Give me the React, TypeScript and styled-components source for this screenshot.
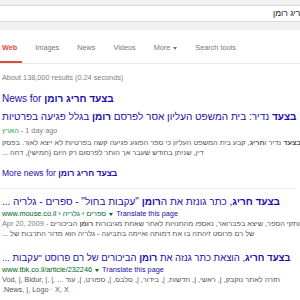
import React from "react";
import styled, { createGlobalStyle } from "styled-components";

const blue = "#1a0dab";
const small = "7.3px";

const GlobalStyle = createGlobalStyle`
  html, body {
    margin: 0;
    width: 300px;
    height: 300px;
    overflow: hidden;
    background: #fff;
    font-family: "Liberation Sans", Arial, sans-serif;
  }
`;

const Header = styled.header`
  background: #f2f1f2;
  padding: 5px 0 8px;
`;

const SearchField = styled.div`
  height: 15px;
  background: #fff;
  border-top: 1px solid #d9d9d9;
  border-bottom: 1px solid #d9d9d9;
  padding-left: 273px;
  font-size: 8.5px;
  line-height: 15px;
  color: #222;
  white-space: nowrap;
  overflow: hidden;
`;

const Tabs = styled.nav`
  display: flex;
  gap: 11px;
  border-bottom: 1px solid #ebebeb;
`;

const Tab = styled.div<{ $active?: boolean }>`
  padding: 13px 5px 8px 2px;
  line-height: 10px;
  font-size: ${small};
  color: ${(p) => (p.$active ? "#dd4b39" : "#777")};
  font-weight: ${(p) => (p.$active ? "bold" : "normal")};
  border-bottom: 2px solid ${(p) => (p.$active ? "#dd4b39" : "transparent")};
  white-space: nowrap;
  display: flex;
  align-items: center;
  gap: 3px;
`;

const Caret = styled.span<{ $color: string }>`
  display: inline-block;
  width: 0;
  height: 0;
  border-left: 2.5px solid transparent;
  border-right: 2.5px solid transparent;
  border-top: 3px solid ${(p) => p.$color};
  vertical-align: middle;
`;

const Main = styled.main`
  padding-left: 2px;
`;

const Stats = styled.div`
  margin-top: 9px;
  font-size: ${small};
  line-height: 10px;
  color: #808080;
`;

const NewsHeading = styled.div`
  margin-top: 10px;
  font-size: 10px;
  line-height: 12px;
  color: ${blue};
  white-space: nowrap;
`;

const Title = styled.div<{ $top?: number; $size?: number }>`
  margin-top: ${(p) => p.$top ?? 0}px;
  font-size: ${(p) => p.$size ?? 10}px;
  line-height: 12px;
  color: ${blue};
  white-space: nowrap;
`;

const Meta = styled.div<{ $top?: number }>`
  margin-top: ${(p) => p.$top ?? 1}px;
  font-size: ${small};
  line-height: 10px;
  color: #808080;
  white-space: nowrap;
  display: flex;
  align-items: center;
  gap: 3px;
`;

const Green = styled.span<{ $light?: boolean }>`
  color: ${(p) => (p.$light ? "#2a9a46" : "#006621")};
  unicode-bidi: isolate;
`;

const Translate = styled.span`
  color: ${blue};
`;

const Snippet = styled.div<{ $top?: number }>`
  margin-top: ${(p) => p.$top ?? 0}px;
  font-size: ${small};
  line-height: 10px;
  color: #545454;
`;

const Line = styled.div`
  white-space: nowrap;
`;

const Rtl = styled.span`
  direction: rtl;
  unicode-bidi: isolate;
`;

const DateText = styled.span`
  color: #808080;
`;

const MoreNews = styled.div`
  margin-top: 9px;
  font-size: 8.5px;
  line-height: 12px;
  color: ${blue};
  white-space: nowrap;
`;

const Divider = styled.hr`
  margin: 9px 0 0 -2px;
  width: 295px;
  height: 1px;
  border: 0;
  background: #ebebeb;
`;

const Result = styled.section<{ $top: number }>`
  margin-top: ${(p) => p.$top}px;
`;

export default function App() {
  return (
    <>
      <GlobalStyle />
      <Header>
        <SearchField>
          <Rtl>בצעד חריג רומן</Rtl>
        </SearchField>
      </Header>
      <Tabs>
        <Tab $active>Web</Tab>
        <Tab>Images</Tab>
        <Tab>News</Tab>
        <Tab>Videos</Tab>
        <Tab>
          More <Caret $color="#777" />
        </Tab>
        <Tab>Search tools</Tab>
      </Tabs>
      <Main>
        <Stats>About 138,000 results (0.24 seconds)</Stats>
        <NewsHeading>
          News for <Rtl><b>בצעד חריג רומן</b></Rtl>
        </NewsHeading>
        <Title $top={6}>
          <Rtl>
            <b>בצעד</b> נדיר: בית המשפט העליון אסר לפרסם <b>רומן</b> בגלל פגיעה בפרטיות
          </Rtl>
        </Title>
        <Meta $top={3}>
          <span>
            <Green $light>הארץ</Green> - 1 day ago
          </span>
        </Meta>
        <Snippet $top={2}>
          <Line>
            <Rtl>
              <b>בצעד</b> נדיר ו<b>חריג</b>, קבע בית המשפט העליון כי ספר הפוגע פגיעה קשה בפרטיות לא ייצא לאור. בפסק
            </Rtl>
          </Line>
          <Line>
            <Rtl>דין, שניתן בחודש שעבר אך הותר לפרסום רק היום (חמישי), דחה ...</Rtl>
          </Line>
        </Snippet>
        <MoreNews>
          More news for <Rtl><b>בצעד חריג רומן</b></Rtl>
        </MoreNews>
        <Divider />
        <Result $top={7}>
          <Title>
            <Rtl>
              <b>בצעד חריג</b>, כתר גונזת את ה<b>רומן</b> "עקבות בחול" - ספרים - גלריה ...
            </Rtl>
          </Title>
          <Meta>
            <Green>www.mouse.co.il › ספרים › גלריה</Green>
            <Caret $color="#006621" />
            <Translate>Translate this page</Translate>
          </Meta>
          <Snippet>
            <Line>
              <DateText>Apr 20, 2009 - </DateText>
              <Rtl>
                עותקי הספר, שיצא בפברואר, נאספו מהחנויות לאחר שאחת מגיבורות <b>רומן</b> הביכורים
              </Rtl>
            </Line>
            <Line>
              <Rtl>של רם פרוסט זיהתה בו את דמותה ואיימה בתביעה - גלריה הוא מדור התרבות של ...</Rtl>
            </Line>
          </Snippet>
        </Result>
        <Result $top={13}>
          <Title $size={9.5}>
            <Rtl>
              <b>בצעד חריג</b>, הוצאת כתר גנזה את <b>רומן</b> הביכורים של רם פרוסט "עקבות ...
            </Rtl>
          </Title>
          <Meta>
            <Green>www.tbk.co.il/article/232246</Green>
            <Caret $color="#006621" />
            <Translate>Translate this page</Translate>
          </Meta>
          <Snippet>
            <Line>
              Vod, |, Bidur, |, |,{" "}
              <Rtl>חזרה לאתר נוקבק, |, ראשי, |, חדשות, |, בידור, |, סלבס, |, ספורט, |, עוד ...</Rtl>
            </Line>
            <Line>.News, |, Logo · X, X</Line>
          </Snippet>
        </Result>
      </Main>
    </>
  );
}
